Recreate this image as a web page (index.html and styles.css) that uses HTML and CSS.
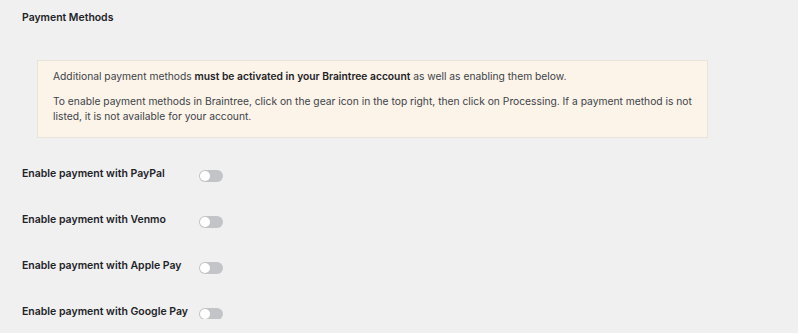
FILE: index.html
```html
<!DOCTYPE html>
<html>
<head>
<meta charset="utf-8">
<link rel="stylesheet" href="styles.css">
</head>
<body>
<div class="page">
  <h2 class="title">Payment Methods</h2>
  <div class="notice">
    <p>Additional payment methods <strong>must be activated in your Braintree account</strong> as well as enabling them below.</p>
    <p>To enable payment methods in Braintree, click on the gear icon in the top right, then click on Processing. If a payment method is not listed, it is not available for your account.</p>
  </div>
  <div class="rows">
    <div class="row"><span class="label">Enable payment with PayPal</span><span class="toggle"><span class="knob"></span></span></div>
    <div class="row"><span class="label">Enable payment with Venmo</span><span class="toggle"><span class="knob"></span></span></div>
    <div class="row"><span class="label">Enable payment with Apple Pay</span><span class="toggle"><span class="knob"></span></span></div>
    <div class="row"><span class="label">Enable payment with Google Pay</span><span class="toggle"><span class="knob"></span></span></div>
  </div>
</div>
</body>
</html>
```

FILE: styles.css
```css
html, body {
  margin: 0;
  padding: 0;
  background: #f0f0f1;
}
body {
  font-family: Inter, "Noto Sans", sans-serif;
  color: #1d2327;
  font-size: 10px;
}
.page {
  padding: 11px 22px 0 22px;
}
.title {
  margin: 0;
  font-size: 10.45px;
  font-weight: 600;
  line-height: 14px;
  color: #1d2327;
}
.notice {
  margin: 35px 0 0 15px;
  width: 639px;
  background: #fcf4e8;
  border: 1px solid #e8e4dc;
  padding: 8px 15px 13px 15px;
}
.notice p {
  margin: 0;
  font-size: 10.28px;
  line-height: 15px;
  color: #3c434a;
}
.notice p + p {
  margin-top: 10px;
}
.notice strong {
  font-weight: 600;
  color: #1d2327;
}
.rows {
  display: flex;
  flex-direction: column;
  margin-top: 29px;
  gap: 32px;
}
.row {
  display: flex;
  align-items: center;
  height: 14px;
}
.label {
  width: 177px;
  font-weight: 600;
  font-size: 10.5px;
  line-height: 14px;
  color: #1d2327;
}
.toggle {
  position: relative;
  width: 24px;
  height: 12px;
  border-radius: 6px;
  background: #c3c4c7;
  margin-top: 3px;
}
.knob {
  position: absolute;
  left: 1px;
  top: 1px;
  width: 10px;
  height: 10px;
  border-radius: 50%;
  background: #fff;
}
```
